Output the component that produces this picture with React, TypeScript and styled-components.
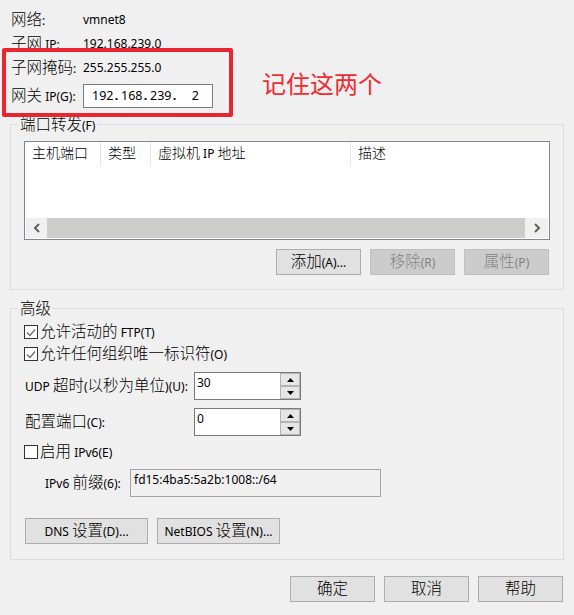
import React from "react";
import styled, { createGlobalStyle } from "styled-components";

const GlobalStyle = createGlobalStyle`
  html, body { margin: 0; padding: 0; background: #f0f0f0; }
  body {
    font-family: "Noto Sans", "Noto Sans CJK SC", sans-serif;
    font-size: 12px;
    line-height: 16px;
    color: #000;
  }
  * { box-sizing: border-box; }
`;

const CJK = /([\u2E80-\u9FFF\uF900-\uFAFF\uFF00-\uFFEF]+)/;

const Han = styled.span<{ $size?: number }>`
  font-family: "Noto Sans CJK SC", sans-serif;
  font-size: ${(p) => p.$size ?? 15.5}px;
  font-weight: 300;
  line-height: 1;
`;

const Run = styled.span`
  white-space: pre;
`;

function T({ s, size }: { s: string; size?: number }) {
  const parts = s.split(CJK);
  return (
    <Run>
      {parts.map((p, i) =>
        i % 2 === 1 ? (
          <Han key={i} $size={size}>
            {p}
          </Han>
        ) : p ? (
          <React.Fragment key={i}>{p}</React.Fragment>
        ) : null
      )}
    </Run>
  );
}

const Page = styled.div`
  position: relative;
  width: 574px;
  height: 615px;
  padding: 8px 10px 0 10px;
  display: flex;
  flex-direction: column;
`;

const InfoGrid = styled.div`
  display: grid;
  grid-template-columns: 72px auto;
  grid-template-rows: 24px 24px 24px 32px;
  align-items: center;
  padding-left: 1px;
`;

const InfoLabel = styled.div`
  white-space: nowrap;
`;

const IpBox = styled.div`
  display: flex;
  align-items: center;
  width: 130px;
  height: 24px;
  border: 1px solid #7a7a7a;
  background: #fff;
  padding-left: 8px;
  font-size: 12.5px;
`;

const Octet = styled.span`
  width: 20px;
  text-align: right;
`;

const Dot = styled.span`
  width: 9px;
  text-align: center;
  font-weight: 700;
`;

const Group = styled.fieldset<{ $mt: number; $pt: number; $pb: number }>`
  margin: ${(p) => p.$mt}px 0 0 0;
  min-width: 0;
  border: 1px solid #dcdcdc;
  padding: ${(p) => p.$pt}px 13px ${(p) => p.$pb}px 13px;
`;

const Legend = styled.legend`
  padding: 0 2px;
  margin-left: -6px;
  height: 16px;
  line-height: 16px;
`;

const Table = styled.div`
  height: 99px;
  border: 1px solid #828790;
  background: #fff;
  display: flex;
  flex-direction: column;
`;

const HeaderRow = styled.div`
  display: flex;
  height: 24px;
  flex: none;
`;

const HeaderCell = styled.div<{ $w?: number; $last?: boolean }>`
  ${(p) => (p.$w ? `width: ${p.$w}px; flex: none;` : "flex: 1;")}
  border-right: ${(p) => (p.$last ? "none" : "1px solid #e5e5e5")};
  padding: 0 0 2px 7px;
  display: flex;
  align-items: center;
  white-space: nowrap;
`;

const TableBody = styled.div`
  flex: 1;
`;

const HScroll = styled.div`
  display: flex;
  height: 20px;
  margin: 0 1px 1px 1px;
  background: #f0f0f0;
  flex: none;
`;

const ScrollArrow = styled.div<{ $w: number }>`
  width: ${(p) => p.$w}px;
  display: flex;
  align-items: center;
  justify-content: center;
  flex: none;
`;

const ScrollThumb = styled.div`
  flex: 1;
  background: #cdcdcd;
`;

const ButtonRow = styled.div<{ $mt: number; $end?: boolean }>`
  display: flex;
  gap: 9px;
  justify-content: ${(p) => (p.$end ? "flex-end" : "flex-start")};
  margin-top: ${(p) => p.$mt}px;
  padding: ${(p) => (p.$end ? "0 1px 0 0" : "0 0 0 1px")};
`;

const Button = styled.button<{ $w: number }>`
  width: ${(p) => p.$w}px;
  height: 26px;
  padding: 0;
  border: 1px solid #adadad;
  background: #e1e1e1;
  color: #000;
  font-family: inherit;
  font-size: 12px;
  line-height: 16px;
  display: flex;
  align-items: center;
  justify-content: center;
  white-space: nowrap;
  &:disabled {
    background: #cccccc;
    border-color: #bfbfbf;
    color: #838383;
  }
`;

const Stack = styled.div`
  display: flex;
  flex-direction: column;
`;

const CheckRow = styled.div<{ $mt?: number }>`
  display: flex;
  align-items: center;
  gap: 2px;
  height: 22px;
  margin-top: ${(p) => p.$mt ?? 0}px;
  white-space: nowrap;
`;

const CheckBox = styled.span`
  width: 14px;
  height: 14px;
  border: 1px solid #333;
  background: #fff;
  display: flex;
  align-items: center;
  justify-content: center;
  flex: none;
`;

const FieldRow = styled.div<{ $mt: number }>`
  display: flex;
  align-items: center;
  height: 28px;
  margin-top: ${(p) => p.$mt}px;
  white-space: nowrap;
`;

const FieldLabel = styled.div<{ $w: number; $indent?: number }>`
  width: ${(p) => p.$w}px;
  padding-left: ${(p) => p.$indent ?? 1}px;
  flex: none;
`;

const Spinner = styled.div`
  display: flex;
  width: 107px;
  height: 28px;
  border: 1px solid #7a7a7a;
  background: #fff;
`;

const SpinText = styled.div`
  flex: 1;
  padding: 2px 0 0 2px;
`;

const SpinButtons = styled.div`
  display: flex;
  flex-direction: column;
  width: 20px;
  flex: none;
`;

const SpinButton = styled.div`
  flex: 1;
  border: 1px solid #b4b4b4;
  background: #e6e6e6;
  display: flex;
  align-items: center;
  justify-content: center;
`;

const PrefixBox = styled.div`
  width: 251px;
  height: 28px;
  border: 1px solid #a3a3a3;
  background: #f0f0f0;
  padding: 2px 0 0 3px;
`;

const Annotation = styled.div`
  position: absolute;
  left: 2px;
  top: 48px;
  display: flex;
  align-items: center;
  pointer-events: none;
`;

const RedBox = styled.div`
  width: 231px;
  height: 69px;
  border: 4px solid #e9262f;
  border-radius: 2px;
`;

const Note = styled.span`
  margin-left: 29px;
  font-family: "Noto Sans CJK SC", sans-serif;
  font-size: 24px;
  line-height: 24px;
  color: #ee2c33;
`;

const Chevron = ({ dir }: { dir: "left" | "right" }) => (
  <svg width="8" height="10" viewBox="0 0 8 10">
    <polyline
      points={dir === "left" ? "6,1 2,5 6,9" : "2,1 6,5 2,9"}
      fill="none"
      stroke="#606060"
      strokeWidth="2"
    />
  </svg>
);

const Check = () => (
  <svg width="10" height="9" viewBox="0 0 10 9">
    <polyline points="1,4.5 4,7.5 9,1.5" fill="none" stroke="#6a6a6a" strokeWidth="1.2" />
  </svg>
);

const Tri = ({ up }: { up?: boolean }) => (
  <svg width="7" height="4" viewBox="0 0 7 4">
    <polygon points={up ? "0,4 7,4 3.5,0" : "0,0 7,0 3.5,4"} fill="#000" />
  </svg>
);

export default function App() {
  return (
    <>
      <GlobalStyle />
      <Page>
        <InfoGrid>
          <InfoLabel>
            <T s="网络:" />
          </InfoLabel>
          <div>vmnet8</div>
          <InfoLabel>
            <T s="子网 IP:" />
          </InfoLabel>
          <div>192.168.239.0</div>
          <InfoLabel>
            <T s="子网掩码:" />
          </InfoLabel>
          <div>255.255.255.0</div>
          <InfoLabel>
            <T s="网关 IP(G):" />
          </InfoLabel>
          <IpBox>
            <Octet>192</Octet>
            <Dot>.</Dot>
            <Octet>168</Octet>
            <Dot>.</Dot>
            <Octet>239</Octet>
            <Dot>.</Dot>
            <Octet>2</Octet>
          </IpBox>
        </InfoGrid>

        <Group $mt={4} $pt={9} $pb={14}>
          <Legend>
            <T s="端口转发(F)" />
          </Legend>
          <Table>
            <HeaderRow>
              <HeaderCell $w={76}>
                <T s="主机端口" size={14} />
              </HeaderCell>
              <HeaderCell $w={50}>
                <T s="类型" size={14} />
              </HeaderCell>
              <HeaderCell $w={200}>
                <T s="虚拟机 IP 地址" size={14} />
              </HeaderCell>
              <HeaderCell $last>
                <T s="描述" size={14} />
              </HeaderCell>
            </HeaderRow>
            <TableBody />
            <HScroll>
              <ScrollArrow $w={21}>
                <Chevron dir="left" />
              </ScrollArrow>
              <ScrollThumb />
              <ScrollArrow $w={23}>
                <Chevron dir="right" />
              </ScrollArrow>
            </HScroll>
          </Table>
          <ButtonRow $mt={9} $end>
            <Button $w={85}>
              <T s="添加(A)..." />
            </Button>
            <Button $w={85} disabled>
              <T s="移除(R)" />
            </Button>
            <Button $w={85} disabled>
              <T s="属性(P)" />
            </Button>
          </ButtonRow>
        </Group>

        <Group $mt={10} $pt={5} $pb={15}>
          <Legend>
            <T s="高级" />
          </Legend>
          <Stack>
            <CheckRow>
              <CheckBox>
                <Check />
              </CheckBox>
              <T s="允许活动的 FTP(T)" />
            </CheckRow>
            <CheckRow>
              <CheckBox>
                <Check />
              </CheckBox>
              <T s="允许任何组织唯一标识符(O)" />
            </CheckRow>
            <FieldRow $mt={7}>
              <FieldLabel $w={170}>
                <T s="UDP 超时(以秒为单位)(U):" />
              </FieldLabel>
              <Spinner>
                <SpinText>30</SpinText>
                <SpinButtons>
                  <SpinButton>
                    <Tri up />
                  </SpinButton>
                  <SpinButton>
                    <Tri />
                  </SpinButton>
                </SpinButtons>
              </Spinner>
            </FieldRow>
            <FieldRow $mt={8}>
              <FieldLabel $w={170}>
                <T s="配置端口(C):" />
              </FieldLabel>
              <Spinner>
                <SpinText>0</SpinText>
                <SpinButtons>
                  <SpinButton>
                    <Tri up />
                  </SpinButton>
                  <SpinButton>
                    <Tri />
                  </SpinButton>
                </SpinButtons>
              </Spinner>
            </FieldRow>
            <CheckRow $mt={5}>
              <CheckBox />
              <T s="启用 IPv6(E)" />
            </CheckRow>
            <FieldRow $mt={6}>
              <FieldLabel $w={106} $indent={21}>
                <T s="IPv6 前缀(6):" />
              </FieldLabel>
              <PrefixBox>fd15:4ba5:5a2b:1008::/64</PrefixBox>
            </FieldRow>
            <ButtonRow $mt={21}>
              <Button $w={123}>
                <T s="DNS 设置(D)..." />
              </Button>
              <Button $w={123}>
                <T s="NetBIOS 设置(N)..." />
              </Button>
            </ButtonRow>
          </Stack>
        </Group>

        <ButtonRow $mt={16} $end>
          <Button $w={85}>
            <T s="确定" />
          </Button>
          <Button $w={85}>
            <T s="取消" />
          </Button>
          <Button $w={85}>
            <T s="帮助" />
          </Button>
        </ButtonRow>

        <Annotation>
          <RedBox />
          <Note>记住这两个</Note>
        </Annotation>
      </Page>
    </>
  );
}
